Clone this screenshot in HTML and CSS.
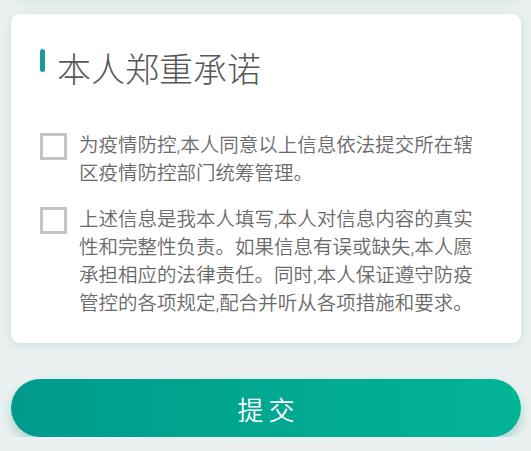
FILE: index.html
```html
<!DOCTYPE html>
<html lang="zh-CN">
<head>
    <meta charset="UTF-8">
    <meta name="viewport" content="width=device-width, initial-scale=1.0">
    <title>本人郑重承诺</title>
    <link rel="stylesheet" href="styles.css">
</head>
<body>
    <div class="card card-prev"></div>
    <section class="card pledge">
        <h2 class="pledge-title"><span class="bar"></span>本人郑重承诺</h2>
        <label class="item">
            <span class="check"></span>
            <span class="item-text">为疫情防控,本人同意以上信息依法提交所在辖区疫情防控部门统筹管理。</span>
        </label>
        <label class="item">
            <span class="check"></span>
            <span class="item-text">上述信息是我本人填写,本人对信息内容的真实性和完整性负责。如果信息有误或缺失,本人愿承担相应的法律责任。同时,本人保证遵守防疫管控的各项规定,配合并听从各项措施和要求。</span>
        </label>
    </section>
    <button class="submit" type="button">提交</button>
</body>
</html>
```

FILE: styles.css
```css
body {
    font-family: Roboto, "Noto Sans CJK SC", sans-serif;
    font-weight: 300;
    margin: 0;
    padding: 0 10px 0 11px;
    background: #ebf1f1;
    overflow: hidden;
}
.card {
    background: #fff;
    border-radius: 9px;
    box-shadow: 0 2px 12px rgba(0, 90, 90, 0.13);
}
.card-prev {
    height: 30px;
    margin-top: -33px;
}
.pledge {
    margin-top: 17px;
    padding: 32px 36px 25px 29px;
}
.pledge-title {
    display: flex;
    align-items: flex-start;
    margin: 0 0 38px;
    font-size: 34px;
    line-height: 48px;
    font-weight: 300;
    color: #585858;
}
.bar {
    width: 5px;
    height: 23px;
    margin: 3px 12px 0 0;
    border-radius: 3px;
    background: #1a9c94;
}
.item {
    display: flex;
    align-items: flex-start;
    gap: 12px;
    margin-bottom: 18px;
}
.item:last-child {
    margin-bottom: 0;
}
.check {
    flex: none;
    width: 27px;
    height: 27px;
    box-sizing: border-box;
    border: 3px solid #c4c4c4;
    margin-top: 1px;
}
.item-text {
    font-size: 19.5px;
    font-weight: 350;
    line-height: 28px;
    color: #6a6a6a;
}
.submit {
    display: block;
    width: 100%;
    height: 58px;
    margin-top: 36px;
    border: none;
    border-radius: 29px;
    background: linear-gradient(to right, #009a8c, #02b595);
    box-shadow: 0 6px 12px rgba(0, 140, 120, 0.28);
    color: #fff;
    font-family: Roboto, "Noto Sans CJK SC", sans-serif;
    font-weight: 350;
    font-size: 26px;
    letter-spacing: 5px;
    text-indent: 5px;
}
```
